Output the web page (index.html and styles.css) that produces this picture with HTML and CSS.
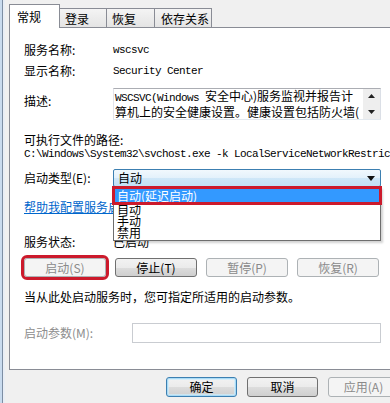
FILE: index.html
```html
<!DOCTYPE html>
<html lang="zh-CN">
<head>
    <meta charset="UTF-8">
    <meta name="viewport" content="width=device-width, initial-scale=1.0">
    <title>Security Center 的属性</title>
    <link rel="stylesheet" href="styles.css">
</head>
<body>
    <div class="frame"></div>

    <div class="dialog">
        <div class="tabs">
            <div class="tab active">常规</div>
            <div class="tab tab-login">登录</div>
            <div class="tab tab-recover">恢复</div>
            <div class="tab tab-deps">依存关系</div>
        </div>

        <div class="panel">
            <div class="row">
                <span>服务名称:</span>
                <span class="mono">wscsvc</span>
            </div>

            <div class="row row-display">
                <span>显示名称:</span>
                <span class="mono">Security Center</span>
            </div>

            <div class="row row-desc">
                <span class="desc-label">描述:</span>
                <div class="desc">
                    <div class="desc-text">
                        <div class="desc-line"><span class="mono">WSCSVC(Windows </span>安全中心)服务监视并报告计</div>
                        <div class="desc-line">算机上的安全健康设置。健康设置包括防火墙(</div>
                    </div>
                    <div class="scrollbar">
                        <svg width="7" height="4" viewBox="0 0 7 4"><path d="M0 4 L3.5 0 L7 4 Z" fill="#222"/></svg>
                        <svg width="7" height="4" viewBox="0 0 7 4"><path d="M0 0 L7 0 L3.5 4 Z" fill="#222"/></svg>
                    </div>
                </div>
            </div>

            <div class="path-label">可执行文件的路径:</div>
            <div class="path mono">C:\Windows\System32\svchost.exe -k LocalServiceNetworkRestricted</div>

            <div class="row row-type">
                <span>启动类型(E):</span>
                <div class="select">
                    <span>自动</span>
                    <svg width="8" height="5" viewBox="0 0 8 5"><path d="M0 0 L8 0 L4 5 Z" fill="#111"/></svg>
                    <ul class="dropdown">
                        <li class="picked">自动(延迟启动)</li>
                        <li>自动</li>
                        <li>手动</li>
                        <li>禁用</li>
                    </ul>
                </div>
            </div>

            <a class="help-link" href="#">帮助我配置服务启动选项。</a>

            <div class="row row-status">
                <span>服务状态:</span>
                <span>已启动</span>
            </div>

            <div class="actions">
                <button class="btn disabled marked">启动(S)</button>
                <button class="btn">停止(T)</button>
                <button class="btn disabled">暂停(P)</button>
                <button class="btn disabled">恢复(R)</button>
            </div>

            <p class="hint">当从此处启动服务时，您可指定所适用的启动参数。</p>

            <div class="row row-param">
                <span class="muted">启动参数(M):</span>
                <div class="param-input"></div>
            </div>
        </div>

        <div class="footer">
            <button class="btn wide default">确定</button>
            <button class="btn wide">取消</button>
            <button class="btn wide disabled">应用(A)</button>
        </div>
    </div>
</body>
</html>
```

FILE: styles.css
```css
* {
    box-sizing: border-box;
}

html, body {
    margin: 0;
    padding: 0;
}

body {
    width: 390px;
    height: 403px;
    overflow: hidden;
    display: flex;
    background: #f0f0f0;
    color: #000;
    font-family: "Noto Sans CJK SC", "Liberation Sans", sans-serif;
    font-size: 12px;
}

.mono {
    font-family: "Liberation Mono", "Noto Sans CJK SC", monospace;
    font-size: 11px;
    letter-spacing: -0.6px;
}

.frame {
    flex: none;
    width: 5px;
    background: linear-gradient(to right, #c9dbee 0, #c9dbee 2px, #7d8ea3 2px, #7d8ea3 3px, #e9eef5 3px);
}

.dialog {
    flex: none;
    width: 402px;
    padding: 0 8px 0 4px;
}

/* tabs */
.tabs {
    display: flex;
    align-items: flex-end;
    height: 27px;
}

.tab {
    height: 19px;
    margin-left: -1px;
    padding: 1px 0 0 5px;
    line-height: 17px;
    border: 1px solid #898c95;
    border-bottom: none;
    background: linear-gradient(#f4f4f4, #e4e4e4);
}

.tab.active {
    position: relative;
    z-index: 1;
    width: 51px;
    height: 24px;
    margin: 0 0 -1px 0;
    padding: 4px 0 0 7px;
    line-height: 16px;
    background: #fff;
}

.tab-login { width: 48px; }
.tab-recover { width: 49px; }
.tab-deps { width: 58px; padding-left: 6px; }

/* panel */
.panel {
    background: #fff;
    border: 1px solid #898c95;
    padding: 15px 0 26px 14px;
}

.row {
    display: grid;
    grid-template-columns: 89px 268px;
    align-items: center;
    line-height: 14px;
}

.row-display { margin-top: 7px; }

.row-desc {
    margin-top: 10px;
    align-items: start;
}

.desc-label { margin-top: 6px; }

.desc {
    display: flex;
    height: 32px;
    border: 1px solid #abadb3;
    border-left-color: #e2e3ea;
    border-right-color: #dbdfe6;
    border-bottom-color: #e3e9ef;
}

.desc-text {
    flex: 1;
    overflow: hidden;
    padding-left: 1px;
    line-height: 14px;
}

.desc-line {
    white-space: nowrap;
}

.scrollbar {
    flex: none;
    width: 17px;
    display: flex;
    flex-direction: column;
    justify-content: space-between;
    align-items: center;
    padding: 5px 0 5px;
    background: #eeeeee;
}

.path-label {
    margin-top: 13px;
    line-height: 14px;
}

.path {
    line-height: 14px;
    white-space: nowrap;
}

.row-type { margin-top: 8px; }

.select {
    position: relative;
    height: 18px;
    display: flex;
    align-items: center;
    justify-content: space-between;
    padding: 0 5px 0 4px;
    border: 1px solid #3c7fb1;
    border-radius: 2px;
    background: linear-gradient(#f1f8fd 0%, #e3f1fb 50%, #cfe7f8 50%, #c2e1f6 100%);
}

.dropdown {
    position: absolute;
    z-index: 10;
    top: calc(100% + 1px);
    left: -1px;
    right: -1px;
    margin: 0;
    padding: 0 0 1px;
    list-style: none;
    background: #fff;
    border: 1px solid #6e6e6e;
    box-shadow: 2px 2px 2px rgba(0, 0, 0, 0.18);
}

.dropdown li {
    padding-left: 3px;
    line-height: 12px;
}

.dropdown li.picked {
    position: relative;
    line-height: 15px;
    background: #3399ff;
    color: #fff;
    outline: 3px solid #cc1a2c;
    outline-offset: -1px;
}

.help-link {
    display: block;
    margin-top: 13px;
    line-height: 14px;
    color: #0066cc;
    white-space: nowrap;
}

.row-status { margin-top: 21px; }

.actions {
    display: flex;
    gap: 9px;
    margin-top: 9px;
}

.btn {
    width: 82px;
    height: 19px;
    padding: 0;
    font-family: inherit;
    font-size: 12px;
    line-height: 16px;
    color: #000;
    border: 1px solid #707070;
    border-radius: 3px;
    background: linear-gradient(#f2f2f2 0%, #ebebeb 50%, #dddddd 50%, #cfcfcf 100%);
}

.btn.disabled {
    color: #8a8a8a;
    border-color: #adb2b5;
    background: #f4f4f4;
}

.btn.marked {
    outline: 3px solid #cc1a2c;
}

.hint {
    margin: 13px 0 0;
    line-height: 14px;
}

.row-param { margin-top: 19px; }

.muted {
    color: #8d8d8d;
}

.param-input {
    width: 249px;
    height: 20px;
    margin-left: 19px;
    border: 1px solid #c9ccd1;
    background: #fff;
}

/* bottom buttons */
.footer {
    display: flex;
    justify-content: flex-end;
    gap: 10px;
    margin-top: 7px;
}

.btn.wide {
    width: 71px;
    height: 20px;
}

.btn.default {
    border-color: #3c7fb1;
    box-shadow: inset 0 0 0 1px #a9dbf6, inset 0 0 0 2px rgba(205, 236, 252, 0.7);
}
```
